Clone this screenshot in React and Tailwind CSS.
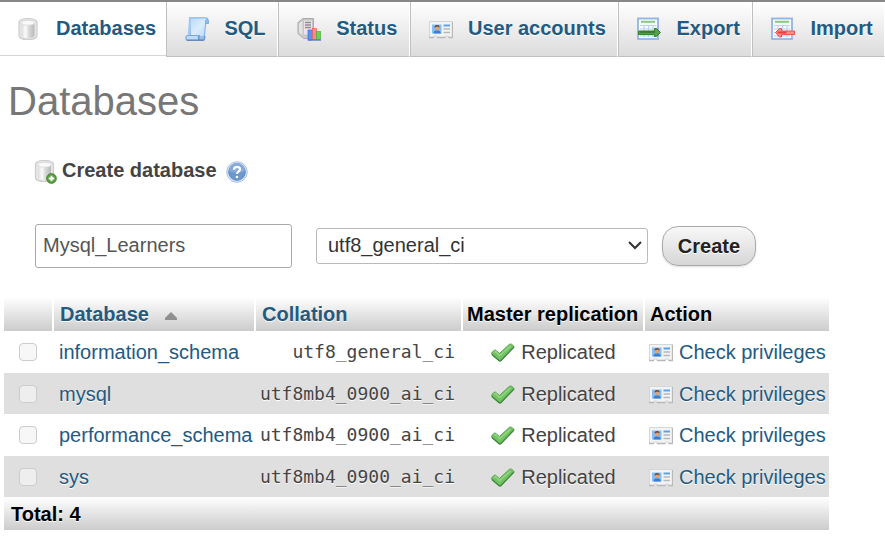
import React from "react";

function DatabaseShape() {
  return (
    <>
      <defs>
        <linearGradient id="cyl" x1="0" x2="1" y1="0" y2="0">
          <stop offset="0" stopColor="#dcdcdc" />
          <stop offset="0.3" stopColor="#fbfbfb" />
          <stop offset="0.6" stopColor="#d6d6d6" />
          <stop offset="1" stopColor="#b9b9b9" />
        </linearGradient>
      </defs>
      <path d="M3 5C3.500 3 7 1.500 12 1.500S20.500 3 21 5v14c-.5 2-4 3.500-9 3.500S3.500 21 3 19z" fill="#e6e6e6" stroke="#cdcdcd" strokeWidth="1.200" />
      <path d="M5.500 6v12.500c0 1.500 2.800 2.300 6.500 2.300s6.500-.8 6.500-2.300V6z" fill="url(#cyl)" />
      <ellipse cx="12" cy="5.800" rx="6.700" ry="2.400" fill="#fafafa" stroke="#d8d8d8" strokeWidth="0.8" />
    </>
  );
}

function DatabaseIcon() {
  return (
    <svg viewBox="0 0 24 24" className="size-6 shrink-0" aria-hidden="true">
      <DatabaseShape />
    </svg>
  );
}

function DatabaseAddIcon() {
  return (
    <svg viewBox="0 0 24 24" className="size-6 shrink-0" aria-hidden="true">
      <g transform="translate(-1.500 -1)">
        <DatabaseShape />
      </g>
      <circle cx="17.500" cy="18.500" r="4.800" fill="#5c9f42" stroke="#3f7d2b" />
      <path d="M17.500 15.700v5.600M14.700 18.500h5.600" stroke="#fff" strokeWidth="1.800" />
    </svg>
  );
}

function SqlIcon() {
  return (
    <svg viewBox="0 0 24 24" className="size-6 shrink-0" aria-hidden="true">
      <defs>
        <linearGradient id="scroll" x1="0" x2="1" y1="0" y2="1">
          <stop offset="0" stopColor="#b9d9f9" />
          <stop offset="0.5" stopColor="#dcecfe" />
          <stop offset="1" stopColor="#b0d2f6" />
        </linearGradient>
      </defs>
      <path d="M4.500 .8h16c1.500 0 3 1.200 2.800 5.200h-2.500L19 21.500 5.500 20z" fill="url(#scroll)" stroke="#86b7ec" strokeWidth="1.200" />
      <path d="M20.500 6.500V3.800c0-1.800 2.800-1.800 2.800.2v2.500z" fill="#93c2f1" stroke="#6ea8e3" strokeWidth="0.8" />
      <path d="M5 1.200L3.800 18.500" fill="none" stroke="#a1c9f4" strokeWidth="2" />
      <path d="M2.500 18.500h11.500c-1 1.500-.4 3.500 1 4.500H2.500c-2.200-.5-2.200-4 0-4.500z" fill="#bfdcf9" stroke="#7ba9dc" strokeWidth="1.200" />
      <path d="M14.500 19c-1.500 1.200-1 3.300.5 4h3.800c.8-.6 1.100-2 1.200-4" fill="#98bfe9" stroke="#688fc2" strokeWidth="1.200" />
      <path d="M1.500 23.300h17.500" stroke="#6284b6" strokeWidth="1.200" />
    </svg>
  );
}

function StatusIcon() {
  return (
    <svg viewBox="0 0 24 24" className="size-6 shrink-0" aria-hidden="true">
      <path d="M1 5.500L6 1.500h10.500V18l-4 3.500H6.500L1 16.500z" fill="#c9c9c9" stroke="#ababab" />
      <path d="M6.500 3h9v15h-9z" fill="#e6e6e6" stroke="#c0c0c0" strokeWidth="0.800" />
      <path d="M2 6.500L5.500 4v14L2 15.500z" fill="#e3e3e3" />
      <path d="M8 5.500h6M8 8h6M8 10.500h6" stroke="#8f8f8f" strokeWidth="1.300" />
      <rect x="11" y="13" width="4.500" height="10" fill="#5a90f2" stroke="#3c73e0" strokeWidth="0.700" />
      <rect x="15.500" y="11.500" width="4" height="11" fill="#fb8c82" stroke="#f05f55" strokeWidth="0.700" />
      <rect x="19.500" y="14.500" width="4" height="8" fill="#6dd05a" stroke="#47b337" strokeWidth="0.700" />
      <path d="M11 23h13" stroke="#5a78c4" strokeWidth="1.400" />
    </svg>
  );
}

function CardIcon() {
  return (
    <svg viewBox="0 0 24 24" className="size-6 shrink-0" aria-hidden="true">
      <path d="M.5 4.500h23v16h-4v-1.500h-3v1.500H8v-1.500H5v1.500H.5z" fill="#f3f3f3" stroke="#d6d6d6" />
      <path d="M0 20.500h5M8 20.500h8.500M19.500 20.500H24M23.500 5v15" stroke="#b8b8b8" strokeWidth="1.300" />
      <rect x="3" y="7.500" width="9.500" height="9" fill="#84bdf8" />
      <circle cx="8" cy="11" r="2.400" fill="#d6a47e" />
      <path d="M5.500 10.500C5.500 7.300 10.800 7.300 10.500 10.500L8.500 9.500z" fill="#71452d" />
      <path d="M4.500 16.500c0-2.500 1.500-3 3.500-3s3.800.5 3.800 3z" fill="#397fce" />
      <path d="M14.500 8.500h6.500" stroke="#59a2ed" strokeWidth="2" />
      <path d="M14.500 12h6.500M14.500 15.500h6.500" stroke="#b2b9c1" strokeWidth="1.400" />
    </svg>
  );
}

function SheetShape() {
  return (
    <>
      <rect x="1" y="1.500" width="20" height="20.500" fill="#f8fbff" stroke="#92b4e4" strokeWidth="1.800" />
      <path d="M4 4.800h14" stroke="#8acb78" strokeWidth="2" />
      <path d="M3 8.500h16M3 12h16M3 15.500h16M3 19h16M7 8v12M11.500 8v12M16 8v12" stroke="#b9d2f2" strokeWidth="1.200" />
    </>
  );
}

function ExportIcon() {
  return (
    <svg viewBox="0 0 24 24" className="size-6 shrink-0" aria-hidden="true">
      <SheetShape />
      <path d="M1.500 14h16v-2.500h2L23.500 15.500l-4 4h-2V17.500h-16z" fill="#5c9f4a" stroke="#37802d" />
      <path d="M3 15h15" stroke="#39702f" strokeWidth="1.500" />
    </svg>
  );
}

function ImportIcon() {
  return (
    <svg viewBox="0 0 24 24" className="size-6 shrink-0" aria-hidden="true">
      <SheetShape />
      <path d="M4.500 15.500l4-4h2V14h13v3.500h-13v2.500h-2z" fill="#f98d8a" stroke="#ef4f4f" />
      <path d="M6.500 15.500h9" stroke="#e93f3f" strokeWidth="2" />
    </svg>
  );
}

function HelpIcon() {
  return (
    <svg viewBox="0 0 24 24" className="size-6" aria-hidden="true">
      <circle cx="12" cy="12" r="10.300" fill="#dbe7f6" stroke="#a9c4e6" />
      <circle cx="12" cy="12" r="8.300" fill="#6c97cd" stroke="#5d88c0" />
      <path d="M4 11a8 8 0 0 1 16 0c-4 2-12 2-16 0z" fill="#86aad9" />
      <path d="M9 9.700c.1-4 6.500-3.700 6 0-.2 1.700-3 2-3 4.300" fill="none" stroke="#fff" strokeWidth="2.200" />
      <circle cx="12" cy="17" r="1.300" fill="#fff" />
    </svg>
  );
}

function CheckIcon() {
  return (
    <svg viewBox="0 0 24 24" className="size-6 shrink-0" aria-hidden="true">
      <path d="M.8 12.500L4 9.800l4.500 3.700L18.500 4.200h2L23.200 6.500 9.800 20.800H8L.8 14.500z" fill="#74c266" stroke="#55a54a" />
      <path d="M3 12.500l1.500-1 4.200 4L19.500 6" fill="none" stroke="#93d684" strokeWidth="1.500" />
      <path d="M1 14.500l7.300 6.300h1.400L23 7" fill="none" stroke="#3f8a3c" strokeWidth="1.300" />
    </svg>
  );
}

const tabs = [
  { label: "SQL", Icon: SqlIcon },
  { label: "Status", Icon: StatusIcon },
  { label: "User accounts", Icon: CardIcon },
  { label: "Export", Icon: ExportIcon },
  { label: "Import", Icon: ImportIcon },
];

const databases = [
  { name: "information_schema", collation: "utf8_general_ci" },
  { name: "mysql", collation: "utf8mb4_0900_ai_ci" },
  { name: "performance_schema", collation: "utf8mb4_0900_ai_ci" },
  { name: "sys", collation: "utf8mb4_0900_ai_ci" },
];

const headCell =
  "border-l-2 border-white bg-linear-to-b from-white to-[#cccccc] bg-clip-padding px-1 text-left font-bold";

export default function App() {
  return (
    <div className="overflow-x-hidden bg-white pb-2 font-['Liberation_Sans',Arial,sans-serif] text-[20px] leading-6 text-[#444444]">
      <nav className="flex h-[57px] border-t-2 border-[#888888] font-bold whitespace-nowrap text-[#235a81] text-shadow-[0_1px_0_#ffffff]">
        <a href="#databases" aria-current="page" className="flex h-[54px] items-center gap-4 border-b border-[#d5d5d5] pr-[10px] pl-4">
          <DatabaseIcon />
          <span className="pb-[2px]">Databases</span>
        </a>
        {tabs.map(({ label, Icon }) => (
          <a
            key={label}
            href={"#" + label}
            className="flex grow items-center justify-center gap-[15px] border-r border-b border-l border-r-white border-b-[#c0c0c0] border-l-[#c0c0c0] bg-linear-to-b from-white to-[#dcdcdc] pr-[11px] pl-[18px]"
          >
            <Icon />
            <span className="pb-[2px]">{label}</span>
          </a>
        ))}
      </nav>

      <main className="px-1">
        <h1 className="mt-6 ml-1 text-[40px] leading-10 text-[#777777]">Databases</h1>

        <form className="mt-[37px] ml-[30px]" onSubmit={(e) => e.preventDefault()}>
          <div className="flex items-center">
            <DatabaseAddIcon />
            <label htmlFor="new-db" className="ml-1 pb-1 font-bold">
              Create database
            </label>
            <a href="#help" aria-label="Documentation" className="ml-2">
              <HelpIcon />
            </a>
          </div>
          <div className="mt-[38px] flex items-center">
            <input
              id="new-db"
              type="text"
              defaultValue="Mysql_Learners"
              className="ml-px h-11 w-[257px] rounded-[3px] border border-[#aaaaaa] px-[7px] pb-[2px] text-[#555555]"
            />
            <div className="relative ml-6 w-[332px]">
              <select
                aria-label="Collation"
                defaultValue="utf8_general_ci"
                className="block h-9 w-full appearance-none rounded-[3px] border border-[#bbbbbb] bg-white pb-[2px] pl-[11px] text-[#333333]"
              >
                <option>utf8_general_ci</option>
                <option>utf8mb4_0900_ai_ci</option>
              </select>
              <svg viewBox="0 0 14 10" className="pointer-events-none absolute top-3 right-[6px] h-[10px] w-[14px]" aria-hidden="true">
                <path d="M1 2l6 6 6-6" fill="none" stroke="#333" strokeWidth="2" />
              </svg>
            </div>
            <button
              type="submit"
              className="ml-[14px] h-10 w-[94px] rounded-[16px] border border-[#aaaaaa] bg-linear-to-b from-[#f8f8f8] to-[#d6d6d6] font-bold text-[#222222] shadow-[0_1px_2px_#dddddd] text-shadow-[0_1px_0_#ffffff]"
            >
              Create
            </button>
          </div>
        </form>

        <table className="mt-[29px] w-full max-w-[825px] table-fixed border-separate border-spacing-0 whitespace-nowrap text-shadow-[0_1px_0_#ffffff]">
          <colgroup>
            <col className="w-[48px]" />
            <col className="w-[202px]" />
            <col className="w-[207px]" />
            <col className="w-[182px]" />
            <col />
          </colgroup>
          <thead>
            <tr className="h-[34px] text-black">
              <td className="bg-linear-to-b from-white to-[#cccccc]" />
              <th scope="col" className={headCell}>
                <a href="#sort-name" className="flex items-center gap-4 pl-[2px] text-[#235a81]">
                  Database
                  <svg viewBox="0 0 12 8" className="mt-1 h-2 w-3" aria-hidden="true">
                    <path d="M6 0l6 6v2H0V6z" fill="#8f8f8f" />
                  </svg>
                </a>
              </th>
              <th scope="col" className={headCell}>
                <a href="#sort-collation" className="pl-[2px] text-[#235a81]">
                  Collation
                </a>
              </th>
              <th scope="col" className={headCell}>Master replication</th>
              <th scope="col" className={headCell}>
                <span className="pl-px">Action</span>
              </th>
            </tr>
          </thead>
          <tbody>
            {databases.map(({ name, collation }) => (
              <tr key={name} className="group odd:h-[42px] even:h-[41px] even:bg-[#dfdfdf]">
                <td>
                  <input
                    type="checkbox"
                    disabled
                    aria-label={"Select " + name}
                    className="ml-[15px] block size-[18px] appearance-none rounded-[4px] border border-[#cccccc] bg-[#f7f7f7] group-even:bg-[#eeeeee]"
                  />
                </td>
                <td className="pl-[7px]">
                  <a href={"#" + name} className="text-[#235a81]">
                    {name}
                  </a>
                </td>
                <td className="pr-[6px] text-right font-['DejaVu_Sans_Mono','Liberation_Mono',monospace] text-[18px]">
                  {collation}
                </td>
                <td>
                  <span className="flex items-center justify-center gap-[6px] pl-[3px]">
                    <CheckIcon />
                    Replicated
                  </span>
                </td>
                <td className="pl-[6px]">
                  <a href={"#privileges-" + name} className="flex items-center gap-[6px] text-[#235a81]">
                    <CardIcon />
                    Check privileges
                  </a>
                </td>
              </tr>
            ))}
          </tbody>
          <tfoot>
            <tr className="h-[33px] text-black">
              <th colSpan={5} className="bg-linear-to-b from-white to-[#cccccc] pl-[7px] text-left font-bold">
                Total: 4
              </th>
            </tr>
          </tfoot>
        </table>
      </main>
    </div>
  );
}
